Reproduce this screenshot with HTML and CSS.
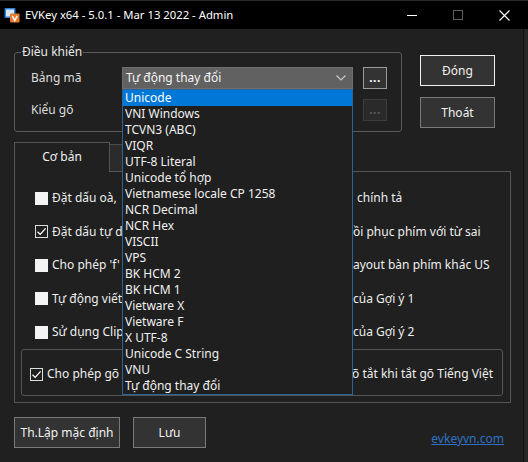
FILE: index.html
```html
<!DOCTYPE html>
<html lang="vi">
<head>
<meta charset="utf-8">
<title>EVKey</title>
<link rel="stylesheet" href="styles.css">
</head>
<body>
<div class="screen">
  <header class="titlebar">
    <svg class="appicon" viewBox="0 0 16 16" width="16" height="16">
      <rect x="0.5" y="1" width="11" height="10" rx="1" fill="#2f7fd6"/>
      <rect x="2" y="2.5" width="8" height="7" fill="#d6e8fa"/>
      <rect x="6" y="6.5" width="9.5" height="9" rx="1" fill="#e8782a"/>
      <path d="M8.3 8.8 L10.75 13.6 L13.2 8.8" stroke="#fff" stroke-width="1.5" fill="none"/>
    </svg>
    <span class="title">EVKey x64 - 5.0.1 - Mar 13 2022 - Admin</span>
    <div class="controls">
      <span class="ctl"><svg width="10" height="10" viewBox="0 0 10 10"><path d="M0 5.5H10" stroke="#fff" stroke-width="1"/></svg></span>
      <span class="ctl"><svg width="10" height="10" viewBox="0 0 10 10"><rect x="0.5" y="0.5" width="9" height="9" stroke="#5e5e5e" fill="none"/></svg></span>
      <span class="ctl"><svg width="11" height="11" viewBox="0 0 11 11"><path d="M0.5 0.5L10.5 10.5M10.5 0.5L0.5 10.5" stroke="#fff" stroke-width="1.1"/></svg></span>
    </div>
  </header>
  <div class="body-row">
    <main class="content">
      <section class="top">
        <fieldset class="group">
          <legend>Điều khiển</legend>
          <div class="field-row">
            <span class="field-label">Bảng mã</span>
            <div class="combo">
              <span>Tự động thay đổi</span>
              <svg class="chev" width="10" height="6" viewBox="0 0 10 6"><path d="M0.5 0.5L5 5L9.5 0.5" stroke="#c8c8c8" fill="none" stroke-width="1.2"/></svg>
            </div>
            <button class="dots">...</button>
          </div>
          <div class="field-row">
            <span class="field-label">Kiểu gõ</span>
            <div class="combo"></div>
            <button class="dots disabled">...</button>
          </div>
        </fieldset>
        <div class="side-buttons">
          <button class="btn default">Đóng</button>
          <button class="btn">Thoát</button>
        </div>
      </section>

      <section class="tabs">
        <div class="tab-strip">
          <div class="tab active">Cơ bản</div>
          <div class="tab other"></div>
        </div>
        <div class="tab-panel">
          <div class="options">
            <label class="opt"><span class="box"></span>Đặt dấu oà,</label>
            <span class="tail shift">chính tả</span>
            <label class="opt"><span class="box checked"><svg viewBox="0 0 13 13" width="13" height="13"><path d="M2.5 6.8L5.2 9.4L10.6 3.4" stroke="#fff" stroke-width="1.3" fill="none"/></svg></span>Đặt dấu tự d</label>
            <span class="tail">ồi phục phím với từ sai</span>
            <label class="opt"><span class="box"></span>Cho phép 'f'</label>
            <span class="tail">ayout bàn phím khác US</span>
            <label class="opt"><span class="box"></span>Tự động viết</label>
            <span class="tail">của Gợi ý 1</span>
            <label class="opt"><span class="box"></span>Sử dụng Clip</label>
            <span class="tail">của Gợi ý 2</span>
          </div>
          <div class="inner-group">
            <label class="opt"><span class="box checked"><svg viewBox="0 0 13 13" width="13" height="13"><path d="M2.5 6.8L5.2 9.4L10.6 3.4" stroke="#fff" stroke-width="1.3" fill="none"/></svg></span>Cho phép gõ</label>
            <span class="tail">õ tắt khi tắt gõ Tiếng Việt</span>
          </div>
        </div>
      </section>

      <footer class="bottom">
        <button class="btn wide">Th.Lập mặc định</button>
        <button class="btn save">Lưu</button>
        <a class="link" href="#">evkeyvn.com</a>
      </footer>
    </main>
    <div class="edge"></div>
  </div>

  <ul class="dropdown">
    <li class="sel">Unicode</li>
    <li>VNI Windows</li>
    <li>TCVN3 (ABC)</li>
    <li>VIQR</li>
    <li>UTF-8 Literal</li>
    <li>Unicode tổ hợp</li>
    <li>Vietnamese locale CP 1258</li>
    <li>NCR Decimal</li>
    <li>NCR Hex</li>
    <li>VISCII</li>
    <li>VPS</li>
    <li>BK HCM 2</li>
    <li>BK HCM 1</li>
    <li>Vietware X</li>
    <li>Vietware F</li>
    <li>X UTF-8</li>
    <li>Unicode C String</li>
    <li>VNU</li>
    <li>Tự động thay đổi</li>
  </ul>
</div>
</body>
</html>
```

FILE: styles.css
```css
* { box-sizing: border-box; }

html, body {
  margin: 0;
  padding: 0;
}

body {
  width: 528px;
  height: 462px;
  overflow: hidden;
  background: #202020;
  color: #f0f0f0;
  font-family: "Noto Sans", "Segoe UI", sans-serif;
  font-size: 12px;
  line-height: 16px;
}

.screen {
  position: relative;
  width: 528px;
  height: 462px;
  display: flex;
  flex-direction: column;
}

/* ---------- title bar ---------- */
.titlebar {
  height: 29px;
  flex: none;
  background: #000;
  border-top: 1px solid #2a2a2a;
  display: flex;
  align-items: center;
}

.appicon {
  margin-left: 4px;
  flex: none;
}

.title {
  margin-left: 5px;
  color: #fff;
  font-size: 11.3px;
}

.controls {
  margin-left: auto;
  margin-right: 1px;
  display: flex;
  height: 100%;
}

.ctl {
  width: 46px;
  display: flex;
  align-items: center;
  justify-content: center;
}

/* ---------- body ---------- */
.body-row {
  flex: 1;
  display: flex;
}

.content {
  width: 523px;
  padding-left: 14px;
  display: flex;
  flex-direction: column;
}

.edge {
  flex: 1;
  background: #262626;
  border-left: 1px solid #111;
}

/* top block */
.top {
  margin-top: 15px;
  display: flex;
  align-items: flex-start;
}

.group {
  margin: 0;
  width: 388px;
  border: 1px solid #5a5a5a;
  border-radius: 3px;
  padding: 7px 14px 10px 16px;
}

.group legend {
  margin-left: -10px;
  padding: 0 1px;
  color: #e8e8e8;
  line-height: 16px;
}

.field-row {
  display: flex;
  align-items: center;
  height: 22px;
}

.field-row + .field-row {
  margin-top: 10px;
}

.field-label {
  width: 91px;
  color: #dcdcdc;
}

.combo {
  width: 231px;
  height: 22px;
  background: #616161;
  border: 1px solid #6e6e6e;
  display: flex;
  align-items: center;
  padding-left: 3px;
  padding-right: 6px;
  color: #f4f4f4;
}

.chev {
  margin-left: auto;
}

.dots {
  margin-left: 10px;
  width: 24px;
  height: 22px;
  padding: 0;
  background: #333;
  border: 1px solid #9a9a9a;
  color: #fff;
  font-family: inherit;
  font-size: 12px;
  font-weight: bold;
  letter-spacing: 0.5px;
  line-height: 16px;
}

.dots.disabled {
  background: #2a2a2a;
  border-color: #3c3c3c;
  color: #5c5c5c;
}

.side-buttons {
  margin-left: 18px;
  margin-top: 11px;
  display: flex;
  flex-direction: column;
  gap: 11px;
}

.btn {
  height: 31px;
  width: 75px;
  background: #333;
  border: 1px solid #7a7a7a;
  color: #f2f2f2;
  font-family: inherit;
  font-size: 12px;
  padding: 0;
}

.btn.default {
  border-color: #f0f0f0;
}

/* tabs */
.tabs {
  margin-top: 10px;
}

.tab-strip {
  height: 29px;
  display: flex;
  align-items: flex-end;
}

.tab {
  height: 30px;
  width: 96px;
  position: relative;
  z-index: 1;
  margin-bottom: -1px;
  background: #202020;
  border: 1px solid #555;
  border-bottom: none;
  padding-bottom: 2px;
  display: flex;
  align-items: center;
  justify-content: center;
  color: #f0f0f0;
}

.tab.other {
  width: 40px;
  height: 27px;
  margin-bottom: 0;
  z-index: 0;
  background: #2b2b2b;
  border-color: #4a4a4a;
  border-left: none;
}

.tab-panel {
  width: 497px;
  border: 1px solid #555;
  padding: 18px 7px 6px 6px;
}

.options {
  display: grid;
  grid-template-columns: 318px 1fr;
  row-gap: 17.5px;
  padding-left: 14px;
}

.opt {
  display: flex;
  align-items: center;
  height: 16px;
  white-space: nowrap;
  color: #eeeeee;
}

.tail {
  height: 16px;
  white-space: nowrap;
  color: #eeeeee;
}

.tail.shift {
  padding-left: 4px;
}

.box {
  width: 13px;
  height: 13px;
  flex: none;
  margin-right: 4px;
  background: #f4f4f4;
}

.box.checked {
  background: #202020;
  border: 1px solid #dcdcdc;
  display: flex;
}

.box.checked svg {
  margin: -1px;
}

.inner-group {
  margin-top: 9px;
  height: 47px;
  border: 1px solid #555;
  border-radius: 3px;
  padding: 16px 0 0 8px;
  display: grid;
  grid-template-columns: 322px 1fr;
}

/* footer */
.bottom {
  margin-top: 14px;
  display: flex;
  align-items: flex-start;
}

.btn.wide {
  width: 106px;
}

.btn.save {
  width: 73px;
  margin-left: 13px;
}

.link {
  margin-left: auto;
  margin-right: 19px;
  margin-top: 14px;
  color: #2f72c4;
  text-decoration: underline;
}

/* dropdown list */
.dropdown {
  position: absolute;
  left: 122px;
  top: 89px;
  width: 231px;
  margin: 0;
  padding: 0;
  list-style: none;
  background: #1f1f1f;
  border: 1px solid #2b649a;
  z-index: 5;
}

.dropdown li {
  height: 16px;
  line-height: 16px;
  padding-left: 2px;
  color: #f0f0f0;
  white-space: nowrap;
}

.dropdown li.sel {
  background: #0078d7;
  color: #fff;
}
```
